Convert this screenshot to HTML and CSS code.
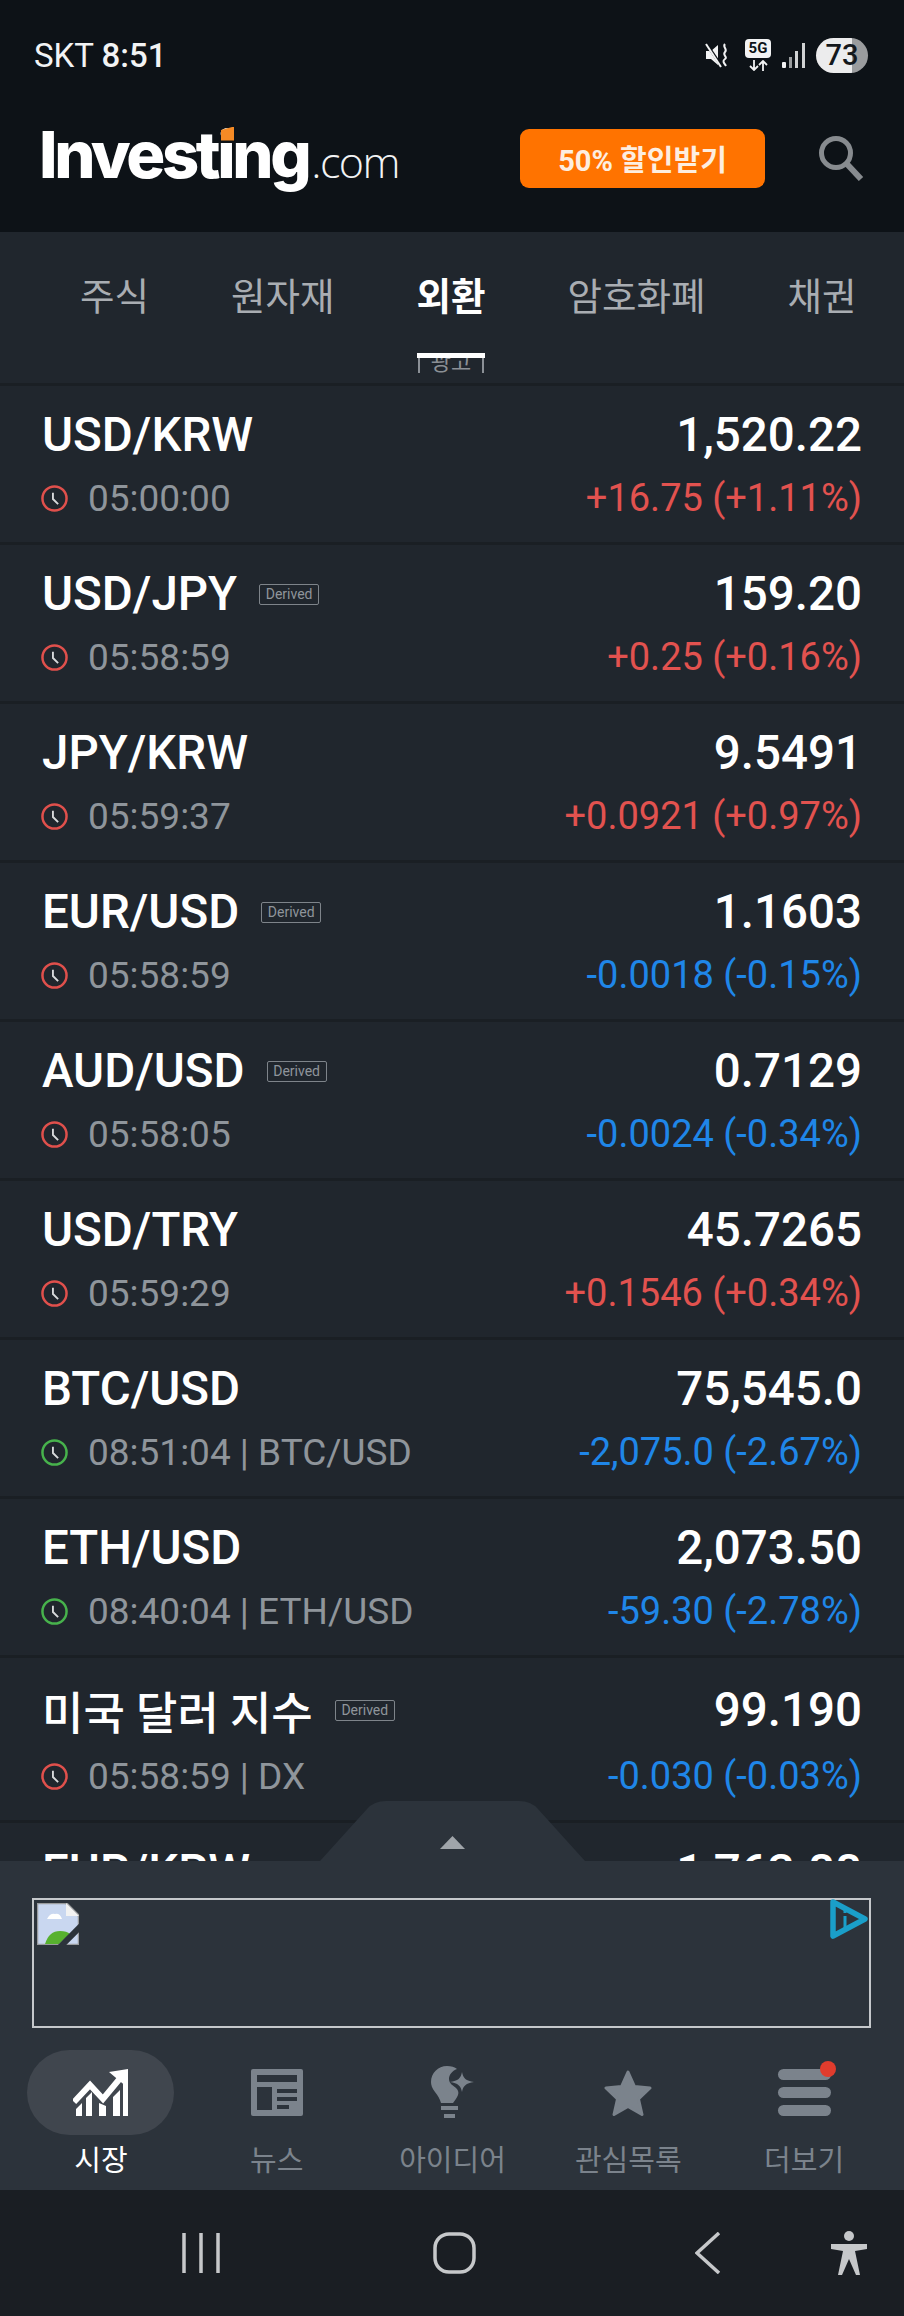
FILE: index.html
```html
<!DOCTYPE html>
<html lang="ko">
<head>
<meta charset="utf-8">
<title>Investing.com</title>
<link rel="stylesheet" href="styles.css">
</head>
<body>
<svg class="defs" width="0" height="0" aria-hidden="true">
  <symbol id="clock" viewBox="0 0 26 26">
    <circle cx="13" cy="13" r="11.6" fill="none" stroke="currentColor" stroke-width="2.400"/>
    <path d="M11.5 7.500v6l5 5" fill="none" stroke="#d8dadc" stroke-width="1.800"/>
  </symbol>
</svg>
<div class="app">
  <header class="top">
    <div class="status">
      <div class="status-left"><span class="carrier">SKT</span> <span class="clock-text">8:51</span></div>
      <div class="status-right">
        <svg class="ico-mute" viewBox="0 0 26 26"><path d="M1 9h5L13 3v20l-7-6H1z" fill="#f2f3f4"/><path d="M1 1l16 24" stroke="#0d1217" stroke-width="3"/><path d="M1 2l15 23" stroke="#f2f3f4" stroke-width="2"/><path d="M20 2c-3 3 3 5 0 8s3 5 0 7-1 4 1 7" fill="none" stroke="#f2f3f4" stroke-width="2"/></svg>
        <div class="net">
          <span class="net-label">5G</span>
          <svg class="net-arrows" viewBox="0 0 26 11"><path d="M9 0v10M5 6l4 4 4-4M18 11V1M14 5l4-4 4 4" fill="none" stroke="#f2f3f4" stroke-width="1.800"/></svg>
        </div>
        <svg class="ico-signal" viewBox="0 0 24 25"><rect x="0" y="19" width="4" height="6" rx="1" fill="#f2f3f4"/><rect x="7" y="14" width="3" height="11" fill="#9a9d9f"/><rect x="13" y="8" width="3" height="17" fill="#d0d2d3"/><rect x="20" y="0" width="3" height="25" fill="#d0d2d3"/></svg>
        <div class="battery"><span>73</span></div>
      </div>
    </div>
    <div class="brand-row">
      <div class="logo"><span class="logo-main">Investing</span><span class="logo-dom">.com</span><i class="logo-flag"></i></div>
      <div class="brand-actions">
        <button class="promo">50% 할인받기</button>
        <svg class="search" viewBox="0 0 46 46"><circle cx="18" cy="18" r="14.500" fill="none" stroke="#878b8f" stroke-width="5"/><path d="M28 28l15 16" stroke="#878b8f" stroke-width="6"/></svg>
      </div>
    </div>
  </header>

  <nav class="tabs">
    <div class="tab"><span class="tab-label">주식</span></div>
    <div class="tab"><span class="tab-label">원자재</span></div>
    <div class="tab tab-active"><span class="tab-label">외환</span><i class="tab-mark"></i><span class="tab-ad">광고</span></div>
    <div class="tab"><span class="tab-label">암호화폐</span></div>
    <div class="tab"><span class="tab-label">채권</span></div>
  </nav>

  <main class="list">
    <section class="row">
      <div class="line-a"><div class="sym">USD/KRW</div><div class="price">1,520.22</div></div>
      <div class="line-b"><div class="meta"><svg class="clk off"><use href="#clock"/></svg><span>05:00:00</span></div><div class="chg up">+16.75 (+1.11%)</div></div>
    </section>
    <section class="row">
      <div class="line-a"><div class="sym">USD/JPY<span class="badge">Derived</span></div><div class="price">159.20</div></div>
      <div class="line-b"><div class="meta"><svg class="clk off"><use href="#clock"/></svg><span>05:58:59</span></div><div class="chg up">+0.25 (+0.16%)</div></div>
    </section>
    <section class="row">
      <div class="line-a"><div class="sym">JPY/KRW</div><div class="price">9.5491</div></div>
      <div class="line-b"><div class="meta"><svg class="clk off"><use href="#clock"/></svg><span>05:59:37</span></div><div class="chg up">+0.0921 (+0.97%)</div></div>
    </section>
    <section class="row">
      <div class="line-a"><div class="sym">EUR/USD<span class="badge">Derived</span></div><div class="price">1.1603</div></div>
      <div class="line-b"><div class="meta"><svg class="clk off"><use href="#clock"/></svg><span>05:58:59</span></div><div class="chg down">-0.0018 (-0.15%)</div></div>
    </section>
    <section class="row">
      <div class="line-a"><div class="sym">AUD/USD<span class="badge">Derived</span></div><div class="price">0.7129</div></div>
      <div class="line-b"><div class="meta"><svg class="clk off"><use href="#clock"/></svg><span>05:58:05</span></div><div class="chg down">-0.0024 (-0.34%)</div></div>
    </section>
    <section class="row">
      <div class="line-a"><div class="sym">USD/TRY</div><div class="price">45.7265</div></div>
      <div class="line-b"><div class="meta"><svg class="clk off"><use href="#clock"/></svg><span>05:59:29</span></div><div class="chg up">+0.1546 (+0.34%)</div></div>
    </section>
    <section class="row">
      <div class="line-a"><div class="sym">BTC/USD</div><div class="price">75,545.0</div></div>
      <div class="line-b"><div class="meta"><svg class="clk on"><use href="#clock"/></svg><span>08:51:04 | BTC/USD</span></div><div class="chg down">-2,075.0 (-2.67%)</div></div>
    </section>
    <section class="row">
      <div class="line-a"><div class="sym">ETH/USD</div><div class="price">2,073.50</div></div>
      <div class="line-b"><div class="meta"><svg class="clk on"><use href="#clock"/></svg><span>08:40:04 | ETH/USD</span></div><div class="chg down">-59.30 (-2.78%)</div></div>
    </section>
    <section class="row row-tall">
      <div class="line-a"><div class="sym sym-ko">미국 달러 지수<span class="badge">Derived</span></div><div class="price">99.190</div></div>
      <div class="line-b"><div class="meta"><svg class="clk off"><use href="#clock"/></svg><span>05:58:59 | DX</span></div><div class="chg down">-0.030 (-0.03%)</div></div>
    </section>
    <section class="row">
      <div class="line-a"><div class="sym">EUR/KRW</div><div class="price">1,763.88</div></div>
    </section>
  </main>

  <div class="panel">
    <svg class="handle" viewBox="0 0 265 60"><path d="M0 60L47 8Q54 0 66 0H199Q211 0 218 8L265 60Z" fill="#2c333b"/><path d="M120 48L132.500 35L145 48Z" fill="#a0a5aa"/></svg>
    <div class="ad">
      <svg class="broken" viewBox="0 0 42 42">
        <path d="M0 0h29l13 13v29H0z" fill="#c9d7f0"/>
        <path d="M0 0h29l13 13v29H0z" fill="none" stroke="#9a9c9e" stroke-width="2.500"/>
        <path d="M29 0v13h13z" fill="#f2f2f2"/>
        <path d="M10 16q3-6 8-5 5-1 7 5z" fill="#fff"/>
        <path d="M8 41q4-13 15-13 7 0 10 3L22 41z" fill="#57b12f"/>
        <path d="M23 44L45 22" stroke="#2c333b" stroke-width="6"/>
      </svg>
      <svg class="adchoice" viewBox="0 0 38 40"><path d="M3 3L35 20 3 37z" fill="none" stroke="#1a9fc9" stroke-width="5.500" stroke-linejoin="round"/><path d="M15 17v12M15 11v3" stroke="#1a9fc9" stroke-width="3"/></svg>
    </div>
    <div class="bottom-nav">
      <div class="nav-item nav-active">
        <div class="nav-icon">
          <svg class="i-market" viewBox="0 0 55 47"><path d="M1 33l16-17 13 14L49 7" fill="none" stroke="#fff" stroke-width="6"/><path d="M36 3L55 0v19z" fill="#fff"/><path d="M3 47V40l6-6v13zM13 47V29l6-6v24zM26 47V34l7 3v10zM40 47V28l7-7v26zM50 47V15l5-5v37z" fill="#fff"/></svg>
        </div>
        <span class="nav-label">시장</span>
      </div>
      <div class="nav-item">
        <div class="nav-icon">
          <svg class="i-news" viewBox="0 0 52 47"><path fill="#7b838c" d="M0 2a2 2 0 012-2h48a2 2 0 012 2v43a2 2 0 01-2 2H2a2 2 0 01-2-2z"/><path fill="#2c333b" d="M6 6h40v7H6zM6 18h15v23H6zM26 20h20v4H26zM26 28h20v4H26zM26 36h12v4H26z"/></svg>
        </div>
        <span class="nav-label">뉴스</span>
      </div>
      <div class="nav-item">
        <div class="nav-icon">
          <svg class="i-bulb" viewBox="0 0 43 53"><path fill="#7b838c" d="M16 0c4 0 8 1 10 3-5 2-8 6-8 10 0 5 5 7 7 9 2 2 3 4 2 7-1 3-3 5-5 8H10c-1-4-3-7-6-11C1 22 0 19 0 16 0 7 7 0 16 0z"/><path fill="#7b838c" d="M31 6c1 6 4 9 12 10-8 1-11 4-12 10-1-6-4-9-12-10 8-1 11-4 12-10z"/><path stroke="#7b838c" stroke-width="4" d="M10 42h17M13 50h11"/></svg>
        </div>
        <span class="nav-label">아이디어</span>
      </div>
      <div class="nav-item">
        <div class="nav-icon">
          <svg class="i-star" viewBox="0 0 48 46"><path fill="#7b838c" stroke="#7b838c" stroke-width="3" stroke-linejoin="round" d="M24 2l6.500 14.500L46 18 34.500 29 38 44.500 24 36.500 10 44.500 13.500 29 2 18l15.500-1.500z"/></svg>
        </div>
        <span class="nav-label">관심목록</span>
      </div>
      <div class="nav-item">
        <div class="nav-icon">
          <div class="i-menu"><i></i><i></i><i></i><b></b></div>
        </div>
        <span class="nav-label">더보기</span>
      </div>
    </div>
  </div>

  <footer class="sysnav">
    <svg class="sys-recent" viewBox="0 0 38 40"><path d="M2 0v40M19 0v40M36 0v40" stroke="#c6c8ca" stroke-width="3.500"/></svg>
    <svg class="sys-home" viewBox="0 0 43 42"><rect x="2" y="2" width="39" height="38" rx="14" fill="none" stroke="#c6c8ca" stroke-width="3.500"/></svg>
    <svg class="sys-back" viewBox="0 0 26 42"><path d="M24 1L2 21l22 20" fill="none" stroke="#c6c8ca" stroke-width="3.500"/></svg>
    <svg class="sys-a11y" viewBox="0 0 38 44"><circle cx="19" cy="5" r="5" fill="#c6c8ca"/><path fill="#c6c8ca" d="M1 13h36v5l-12 2 5 24h-4l-7-16-7 16H8l5-24-12-2z"/></svg>
  </footer>
</div>
</body>
</html>
```
FILE: styles.css
```css
* { box-sizing: border-box; }
html, body { margin: 0; padding: 0; background: #20262d; }
body { font-family: Roboto, "Noto Sans CJK KR", sans-serif; color: #fff; }
.defs { display: block; height: 0; }
.app { width: 904px; height: 2316px; display: flex; flex-direction: column; overflow: hidden; }

.top { height: 232px; flex: none; background: #0d1217; display: flex; flex-direction: column; }
.status { height: 110px; padding: 0 36px 0 34px; display: flex; align-items: center; justify-content: space-between; }
.status-left { font-size: 33px; color: #f2f3f4; }
.clock-text { font-weight: 500; }
.status-right { display: flex; align-items: center; }
.ico-mute { width: 26px; height: 26px; margin-right: 14px; }
.net { width: 26px; display: flex; flex-direction: column; align-items: center; margin-right: 11px; }
.net-label { width: 26px; height: 19px; background: #f2f3f4; border-radius: 4px; color: #0d1217; font-size: 15px; font-weight: 700; line-height: 19px; text-align: center; margin-bottom: 2px; }
.net-arrows { width: 26px; height: 11px; display: block; }
.ico-signal { width: 24px; height: 25px; margin-right: 10px; }
.battery { width: 52px; height: 35px; border-radius: 18px; background: linear-gradient(90deg, #ececed 0 36px, #9a9c9e 36px); color: #14181c; font-size: 29px; font-weight: 500; line-height: 35px; text-align: center; }

.brand-row { height: 96px; padding: 0 40px 0 39px; display: flex; align-items: center; justify-content: space-between; }
.logo { position: relative; display: flex; align-items: baseline; line-height: 70px; }
.logo-main { font-family: Inter, sans-serif; font-weight: 800; font-size: 65px; letter-spacing: -3.4px; color: #fff; }
.logo-dom { font-family: "Open Sans", sans-serif; font-weight: 300; font-size: 43px; letter-spacing: -1.6px; color: #f2f3f4; margin-left: 3px; }
.logo-flag { position: absolute; left: 182px; top: 7px; width: 13px; height: 14px; background: #f58a25; clip-path: polygon(0 25%, 100% 0, 100% 100%, 0 100%); }
.brand-actions { display: flex; align-items: center; }
.promo { width: 245px; height: 59px; margin-right: 53px; border: 0; border-radius: 9px; background: #ff7300; color: #fdeee0; font-family: Roboto, "Noto Sans CJK KR", sans-serif; font-size: 29px; font-weight: 700; padding: 0; }
.search { width: 46px; height: 46px; display: block; }

.tabs { height: 152px; flex: none; padding: 44px 0 0 80px; display: flex; gap: 82px; background: #20262d; overflow: hidden; }
.tab { display: flex; flex-direction: column; align-items: center; }
.tab-label { font-size: 37.500px; line-height: 42px; color: #a9adb2; white-space: nowrap; }
.tab-active .tab-label { color: #fff; font-weight: 700; }
.tab-mark { display: block; width: 68px; height: 5px; margin-top: 35px; background: #fff; flex: none; }
.tab-ad { display: block; width: 66px; height: 15px; overflow: hidden; border-left: 2px solid #8b9096; border-right: 2px solid #8b9096; color: #8b9096; font-size: 22px; line-height: 9px; text-align: center; white-space: nowrap; }

.list { flex: 1; min-height: 0; overflow: hidden; background: #20262d; border-top: 3px solid #1a1f24; margin-top: -1px; }
.row { height: 159px; padding: 25px 42px 0 42px; border-bottom: 3px solid #1a1f24; display: flex; flex-direction: column; flex: none; }
.row-tall { height: 165px; padding-top: 28px; }
.line-a { display: flex; justify-content: space-between; align-items: center; height: 48px; }
.line-b { display: flex; justify-content: space-between; align-items: center; height: 44px; margin-top: 17px; }
.row-tall .line-b { margin-top: 20px; }
.sym { font-size: 47.500px; font-weight: 500; white-space: nowrap; display: flex; align-items: center; }
.sym-ko { font-size: 45px; }
.price { font-size: 47.500px; font-weight: 500; }
.badge { display: block; width: 60px; height: 21px; margin-left: 22px; border: 1.500px solid #7e848a; border-radius: 2px; color: #8f959b; font-size: 14px; font-weight: 400; line-height: 18px; text-align: center; }
.meta { display: flex; align-items: center; color: #8f959b; font-size: 37px; }
.clk { width: 27px; height: 27px; margin: 0 20px 0 -1px; flex: none; }
.off { color: #e0504c; }
.on { color: #47b24c; }
.chg { font-size: 38px; }
.up { color: #e2524f; }
.down { color: #1f86e8; }

.panel { position: relative; height: 329px; flex: none; background: #2c333b; display: flex; flex-direction: column; padding-top: 37px; }
.handle { position: absolute; left: 320px; top: -60px; width: 265px; height: 60px; }
.ad { position: relative; height: 130px; margin: 0 33px 0 32px; border: 2px solid #c5c8cb; padding: 3px 0 0 3px; }
.broken { display: block; width: 42px; height: 42px; }
.adchoice { position: absolute; right: 1px; top: -1px; width: 38px; height: 40px; }
.bottom-nav { display: grid; grid-template-columns: repeat(5, 1fr); padding: 0 12px 0 13px; margin-top: 22px; }
.nav-item { display: flex; flex-direction: column; align-items: center; }
.nav-icon { width: 147px; height: 85px; border-radius: 43px; display: flex; align-items: center; justify-content: center; }
.nav-active .nav-icon { background: #40464e; }
.nav-label { margin-top: 8px; font-size: 29px; line-height: 36px; color: #7b838c; white-space: nowrap; }
.nav-active .nav-label { color: #fff; }
.i-market { width: 55px; height: 47px; }
.i-news { width: 52px; height: 47px; }
.i-bulb { width: 43px; height: 53px; }
.i-star { width: 48px; height: 46px; }
.i-menu { position: relative; width: 53px; height: 47px; display: flex; flex-direction: column; gap: 7px; }
.i-menu i { display: block; height: 11px; border-radius: 6px; background: #7b838c; }
.i-menu b { position: absolute; right: -5px; top: -8px; width: 16px; height: 16px; border-radius: 50%; background: #e03c2d; }

.sysnav { flex: none; height: 126px; background: #1a1e23; position: relative; display: flex; align-items: flex-start; padding: 42px 36px 0 182px; }
.sysnav svg { display: block; }
.sys-recent { width: 38px; height: 40px; margin-right: 213px; margin-top: 1px; }
.sys-home { width: 43px; height: 42px; margin-right: 219px; }
.sys-back { width: 26px; height: 42px; margin-right: 109px; }
.sys-a11y { width: 38px; height: 44px; margin-top: -1px; }
```
